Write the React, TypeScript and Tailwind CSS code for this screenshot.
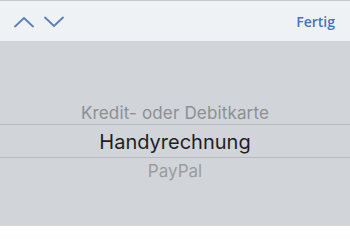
const Chevron = ({ up }: { up?: boolean }) => (
  <svg width="20" height="12" viewBox="0 0 20 12" fill="none">
    <path
      d={up ? "M1 10.5 L10 2 L19 10.5" : "M1 1.5 L10 10 L19 1.5"}
      stroke="#5b7eb6"
      strokeWidth="1.8"
      strokeLinecap="round"
      strokeLinejoin="round"
    />
  </svg>
);

const App = () => {
  return (
    <div
      className="flex h-[226px] w-[350px] flex-col overflow-hidden bg-[#d1d4d8]"
      style={{ fontFamily: '"Open Sans", "Liberation Sans", sans-serif' }}
    >
      <div className="h-px bg-[#c6c9ce]" />
      <div className="flex h-[40px] items-center justify-between bg-[#eff2f5] pl-[14px] pr-[15px]">
        <div className="flex items-center gap-[10px] pt-px">
          <Chevron up />
          <Chevron />
        </div>
        <span className="text-[14px] font-semibold text-[#3f74c2]">Fertig</span>
      </div>

      <div
        className="flex flex-col items-center pt-[62px]"
        style={{ fontFamily: 'Inter, "Liberation Sans", sans-serif' }}
      >
        <div className="flex h-[21px] items-center text-[17px] tracking-[0.15px] text-[#8d8f93]">
          Kredit- oder Debitkarte
        </div>
        <div className="h-px w-full bg-[#b7babf]" />
        <div className="flex h-[32px] w-full items-center justify-center pt-px text-[20px] text-[#1f1f21]">
          Handyrechnung
        </div>
        <div className="h-px w-full bg-[#b7babf]" />
        <div className="flex h-[28px] items-center text-[17px] text-[#9a9ca0]">
          PayPal
        </div>
      </div>
    </div>
  );
};

export default App;
